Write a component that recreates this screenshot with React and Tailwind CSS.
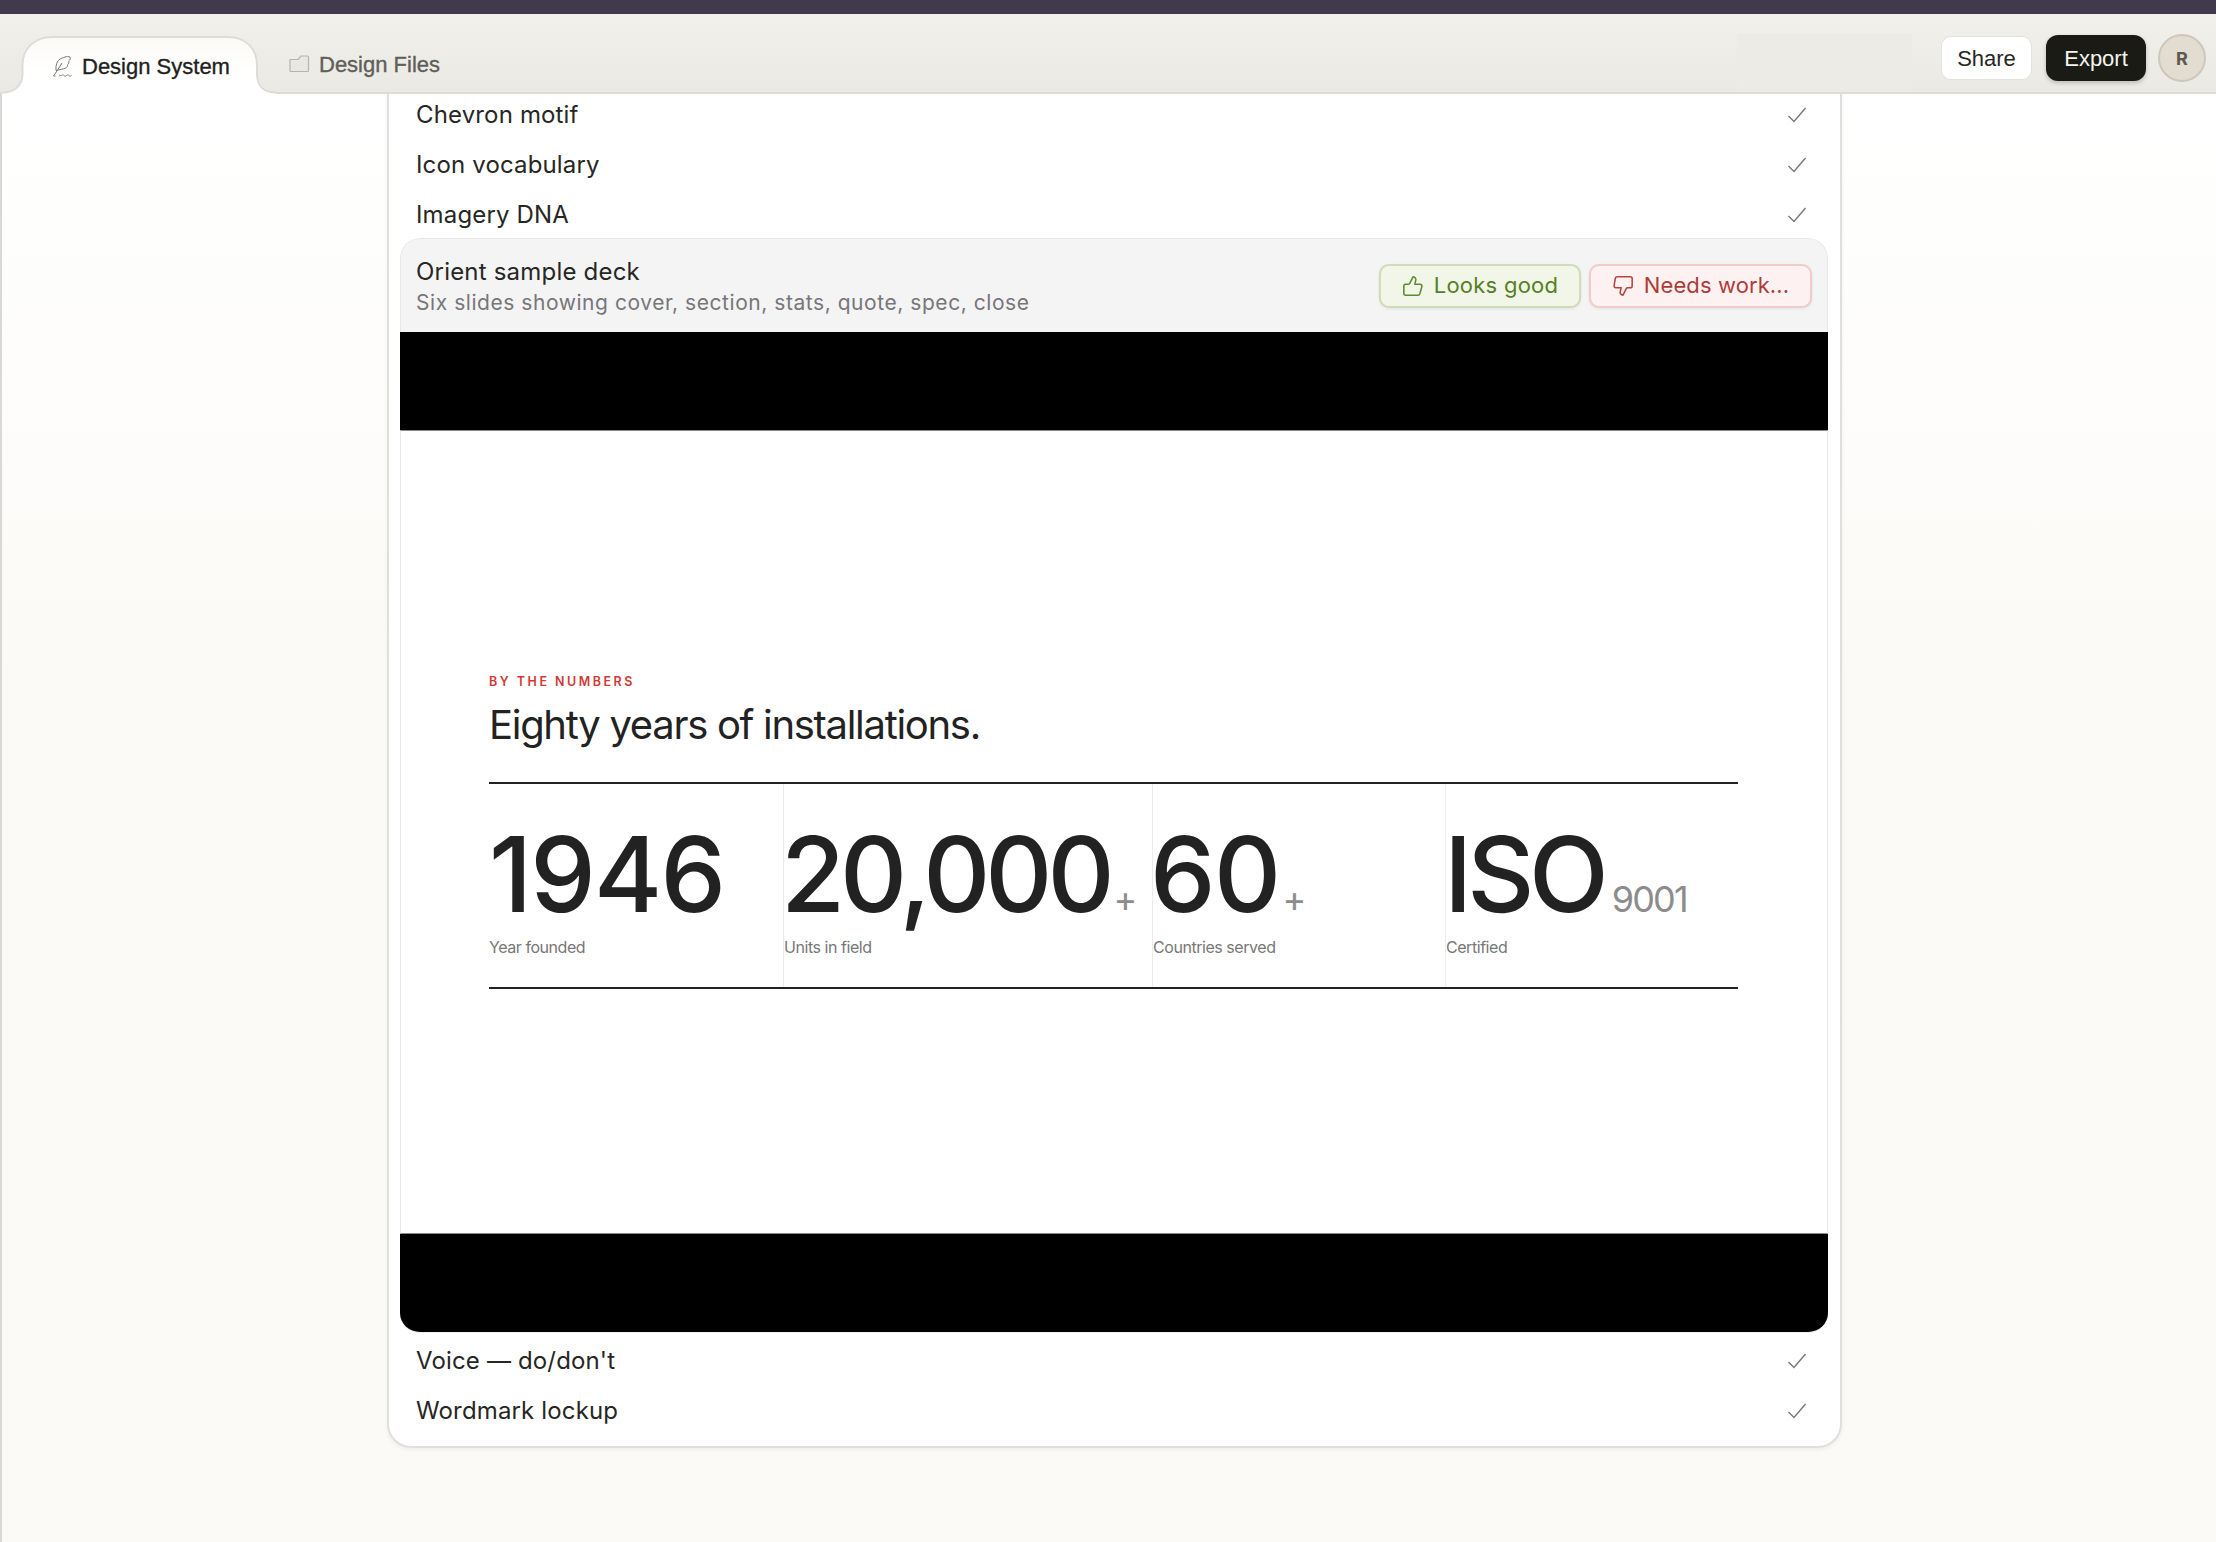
import React from "react";

const Check = () => (
  <svg width="24" height="24" viewBox="0 0 24 24" fill="none" stroke="#777" strokeWidth="1.4" className="shrink-0">
    <path d="M3.5 13l5.5 5.5L20.5 5" />
  </svg>
);

const Row = ({ label, h = "h-[50px]", extra = "" }) => (
  <div className={`flex items-center justify-between pl-[16px] pr-[19px] shrink-0 ${h} ${extra}`}>
    <span className="text-[24px] tracking-[0.15px] text-[#262624]">{label}</span>
    <Check />
  </div>
);

const Stat = ({ className, value, valueClass, suffix, sufClass, label }) => (
  <div className={`flex flex-col border-l border-[#ececec] first:border-l-0 ${className}`}>
    <div className="flex items-baseline h-[150px] pt-[30px]">
      <span className={`text-[104px] leading-[120px] font-[450] text-[#222] ${valueClass}`}>{value}</span>
      {suffix && <span className={`text-[#8c8c8c] ${sufClass}`}>{suffix}</span>}
    </div>
    <div className="text-[16px] leading-[20px] mt-[3px] text-[#777] tracking-[-0.45px]">{label}</div>
  </div>
);

export default function App() {
  return (
    <div className="h-[1542px] w-[2216px] overflow-hidden flex flex-col bg-white font-['Inter',sans-serif]">
      <div className="h-[14px] bg-[#413a4d] shrink-0" />
      <header className="h-[80px] shrink-0 bg-gradient-to-b from-[#f1f0eb] to-[#eae9e4] border-b-[2px] border-[#dddcd7] flex items-end relative">
        <div className="relative w-[275px] h-[56px] flex items-center pl-[51px] mb-[-2px] shrink-0">
          <svg className="absolute left-0 -top-[2px]" width="280" height="58" viewBox="0 0 280 58" fill="none">
            <defs>
              <linearGradient id="tabg" x1="0" y1="0" x2="0" y2="1">
                <stop offset="0" stopColor="#fbfaf6" />
                <stop offset="0.6" stopColor="#ffffff" />
              </linearGradient>
            </defs>
            <path d="M2 56.5C14 56.5 22.5 50 22.5 38V29C22.5 12 35 1 52 1H228C245 1 257 12 257 29V38C257 50 264 56.5 276 56.5V58H2Z" fill="url(#tabg)" />
            <path d="M2 56.5C14 56.5 22.5 50 22.5 38V29C22.5 12 35 1 52 1H228C245 1 257 12 257 29V38C257 50 264 56.5 276 56.5" stroke="#dddcd7" strokeWidth="2" fill="none" />
          </svg>
          <svg className="relative mr-[8px] mt-[1px]" width="23" height="23" viewBox="0 0 23 23" fill="none" stroke="#7a7a78" strokeWidth="1">
            <path d="M5 15.5C4.5 10 6 6 9 4c2-1.3 3.5-1 5-2 1.5-.7 3.5-.5 5 0 .8 1.6 0 3-1.2 3.8.6 1.6 0 3-1.2 3.8.2 1.5-.6 2.7-2 3.4-2.5 1.3-6 1.6-9.6 2.5Z" />
            <path d="M3 20.5L11 8" />
            <path d="M2 21c1-1 1.5 .8 2.5 0M8 20.5c1-1 1.5 .8 2.5 0s1.5-1 2.5 0 1.5 .8 2.5 0 1.5-1 2.5 0 1.5 .8 2.5 0" />
          </svg>
          <span className="relative text-[22px] [-webkit-text-stroke:0.35px_#1f1f1d] text-[#1f1f1d] font-['Liberation_Sans',sans-serif]">Design System</span>
        </div>
        <div className="flex items-center h-[56px] ml-[13px] mb-[2px] pt-[4px] relative">
          <svg className="mr-[9px]" width="22" height="20" viewBox="0 0 22 20" fill="none" stroke="#b5b4ae" strokeWidth="1.2">
            <path d="M2 5.5h8l3-3.5h6.5a1 1 0 0 1 1 1v13.5a1 1 0 0 1-1 1H3a1 1 0 0 1-1-1Z" fill="#e9e8e3" />
          </svg>
          <span className="text-[22px] [-webkit-text-stroke:0.35px_#5f5e59] text-[#5f5e59] font-['Liberation_Sans',sans-serif]">Design Files</span>
        </div>
        <div className="absolute right-[304px] top-[20px] bottom-0 w-[175px] bg-[#ecebe6]" />
        <div className="ml-auto flex items-center gap-[14px] mb-[10px] mr-[10px] relative">
          <button className="h-[44px] w-[91px] rounded-[10px] bg-white border border-[#e3e2dd] text-[22px] text-[#262624] font-['Liberation_Sans',sans-serif]">Share</button>
          <button className="h-[46px] w-[100px] rounded-[12px] bg-[#1b1b16] text-[22px] text-[#f5f4ef] shadow-[0_2px_4px_rgba(0,0,0,0.2)] font-['Liberation_Sans',sans-serif]">Export</button>
          <div className="w-[48px] h-[48px] rounded-full bg-[#e3dcd0] border-[2px] border-[#cfc8ba] flex items-center justify-center text-[18px] font-bold text-[#5c5850] ml-[-2px]">R</div>
        </div>
      </header>
      <main className="flex-1 bg-gradient-to-b from-white via-[#fbfaf6] via-40% to-[#fbfaf6] border-l-[2px] border-[#d8d8d6] pl-[385px] min-h-0 overflow-hidden">
        <div className="w-[1455px] h-[1358px] -mt-[4px] bg-white border-x-[2px] border-b-[2px] border-[#dfdfdd] rounded-b-[24px] shadow-[0_2px_4px_rgba(0,0,0,0.05)] pl-[11px] pr-[12px] flex flex-col">
          <Row label="Chevron motif" />
          <Row label="Icon vocabulary" />
          <Row label="Imagery DNA" extra="-mb-[2px]" />
          <div className="rounded-[20px] overflow-hidden flex flex-col shrink-0 border-b border-[#eeeeee]">
            <div className="h-[94px] shrink-0 bg-[#f4f4f4] border-t-[1.5px] border-x border-[#e8e8e8] rounded-t-[20px] flex items-center justify-between pl-[15px] pr-[15px]">
              <div className="flex flex-col pt-[2px]">
                <span className="text-[24px] leading-[31px] tracking-[0.2px] text-[#262624]">Orient sample deck</span>
                <span className="text-[21px] leading-[31px] tracking-[0.55px] text-[#77767a]">Six slides showing cover, section, stats, quote, spec, close</span>
              </div>
              <div className="flex gap-[8px]">
                <button className="h-[44px] w-[202px] rounded-[10px] bg-[#f2f6e9] border-[2px] border-[#cfdcb8] flex items-center justify-center gap-[10px] text-[22px] tracking-[0.25px] text-[#558021] shadow-[0_1px_3px_rgba(0,0,0,0.08)]">
                  <svg width="22" height="22" viewBox="0 0 24 24" fill="none" stroke="#5f8a2c" strokeWidth="1.7" strokeLinejoin="round"><path d="M15 5.9 14 10h5.8a2 2 0 0 1 1.9 2.6l-2.3 8a2 2 0 0 1-2 1.4H4a2 2 0 0 1-2-2v-8a2 2 0 0 1 2-2h2.8a2 2 0 0 0 1.8-1.1L12 2a3.1 3.1 0 0 1 3 3.9Z" /></svg>
                  Looks good
                </button>
                <button className="h-[44px] w-[223px] rounded-[10px] bg-[#fdf2f1] border-[2px] border-[#f0cbc8] flex items-center justify-center gap-[10px] text-[22px] tracking-[0.1px] text-[#ad3c38] shadow-[0_1px_3px_rgba(0,0,0,0.08)]">
                  <svg width="22" height="22" viewBox="0 0 24 24" fill="none" stroke="#b8433e" strokeWidth="1.7" strokeLinejoin="round"><path d="M9 18.1 10 14H4.2a2 2 0 0 1-1.9-2.6l1.4-8A2 2 0 0 1 5.7 2H20a2 2 0 0 1 2 2v8a2 2 0 0 1-2 2h-2.8a2 2 0 0 0-1.8 1.1L12 22a3.1 3.1 0 0 1-3-3.9Z" /></svg>
                  Needs work...
                </button>
              </div>
            </div>
            <div className="h-[98px] bg-black shrink-0" />
            <div className="h-[804px] shrink-0 bg-white border-y border-y-[#888] border-x border-x-[#e8e8e8] flex flex-col pt-[243px] pl-[88px] pr-[89px]">
              <div className="text-[12.5px] font-semibold tracking-[2.5px] text-[#d03a36] leading-[16px]">BY THE NUMBERS</div>
              <div className="text-[40px] leading-[50px] font-[420] tracking-[-1.3px] text-[#222] mt-[10px]">Eighty years of installations.</div>
              <div className="mt-[32px] border-y-[2px] border-[#222] flex h-[207px]">
                <Stat className="w-[294px]" value="1946" valueClass="tracking-[-1.8px]" label="Year founded" />
                <Stat className="w-[369px]" value="20,000" valueClass="tracking-[-5px] -ml-[3px]" suffix="+" sufClass="text-[36px] ml-[4px]" label="Units in field" />
                <Stat className="w-[293px]" value="60" valueClass="tracking-[-1.6px] -ml-[3px]" suffix="+" sufClass="text-[36px] ml-[3px]" label="Countries served" />
                <Stat className="flex-1" value="ISO" valueClass="tracking-[-5.2px] -ml-[2px]" suffix="9001" sufClass="text-[36px] ml-[8px] tracking-[-1.8px]" label="Certified" />
              </div>
            </div>
            <div className="h-[98px] bg-black shrink-0" />
          </div>
          <Row label="Voice — do/don't" h="h-[55px]" />
          <Row label="Wordmark lockup" h="h-[45px]" />
        </div>
      </main>
    </div>
  );
}
